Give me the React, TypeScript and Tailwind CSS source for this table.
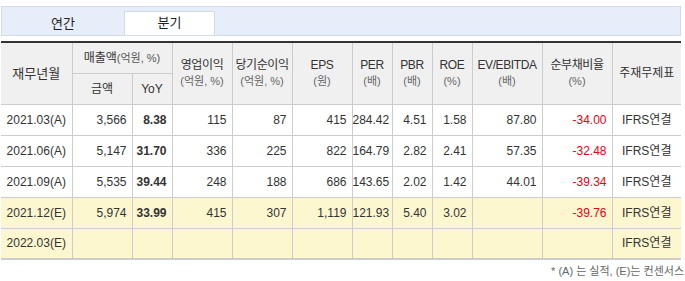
import React from 'react'

type Row = {
  ym: string
  sales: string
  yoy: string
  op: string
  net: string
  eps: string
  per: string
  pbr: string
  roe: string
  ev: string
  debt: string
  est?: boolean
}

const rows: Row[] = [
  { ym: '2021.03(A)', sales: '3,566', yoy: '8.38', op: '115', net: '87', eps: '415', per: '284.42', pbr: '4.51', roe: '1.58', ev: '87.80', debt: '-34.00' },
  { ym: '2021.06(A)', sales: '5,147', yoy: '31.70', op: '336', net: '225', eps: '822', per: '164.79', pbr: '2.82', roe: '2.41', ev: '57.35', debt: '-32.48' },
  { ym: '2021.09(A)', sales: '5,535', yoy: '39.44', op: '248', net: '188', eps: '686', per: '143.65', pbr: '2.02', roe: '1.42', ev: '44.01', debt: '-39.34' },
  { ym: '2021.12(E)', sales: '5,974', yoy: '33.99', op: '415', net: '307', eps: '1,119', per: '121.93', pbr: '5.40', roe: '3.02', ev: '', debt: '-39.76', est: true },
  { ym: '2022.03(E)', sales: '', yoy: '', op: '', net: '', eps: '', per: '', pbr: '', roe: '', ev: '', debt: '', est: true },
]

const widths = [71, 60, 40, 60, 60, 60, 40, 40, 40, 70, 70, 69]

function Head2({ title, unit }: { title: string; unit: string }) {
  return (
    <th rowSpan={2} className="border border-[#cccccc] border-t-0 font-normal align-middle leading-[16px] whitespace-nowrap">
      <div className="text-[12px] tracking-[-0.4px] text-[#333]">{title}</div>
      <div className="text-[11px] text-[#666]">{unit}</div>
    </th>
  )
}

export default function App() {
  const num = 'border border-[#cccccc] text-right pr-[5px]'
  return (
    <div
      className="w-[685px] h-[281px] bg-white px-[1px] pt-[6px]"
      style={{ fontFamily: '"Liberation Sans", "Noto Sans CJK KR", sans-serif' }}
    >
      <div className="w-[680px] h-[30px] bg-[#e8eef9] border border-[#d3dbe8] flex">
        <div className="w-[122px] pt-[8px] text-center text-[13px] leading-[18px] text-[#222]">연간</div>
        <div className="w-[91px] mt-[4px] bg-white border border-b-0 border-[#d3dbe8] text-center pt-[1px] text-[13px] leading-[20px] text-[#222]">
          분기
        </div>
      </div>
      <table className="mt-[5px] w-[680px] border-collapse table-fixed border-t-2 border-t-[#333] border-b-2 border-b-[#cccccc] text-[12px] text-[#333]">
        <colgroup>
          {widths.map((w, i) => (
            <col key={i} style={{ width: w }} />
          ))}
        </colgroup>
        <thead className="bg-[#f0f0f0]">
          <tr className="h-[31px]">
            <th rowSpan={2} className="border border-[#cccccc] border-l-0 border-t-0 font-normal text-[13px]">재무년월</th>
            <th colSpan={2} className="border border-[#cccccc] border-t-0 font-normal text-[12px] whitespace-nowrap">
              매출액<span className="text-[11px] text-[#555]">(억원, %)</span>
            </th>
            <Head2 title="영업이익" unit="(억원, %)" />
            <Head2 title="당기순이익" unit="(억원, %)" />
            <Head2 title="EPS" unit="(원)" />
            <Head2 title="PER" unit="(배)" />
            <Head2 title="PBR" unit="(배)" />
            <Head2 title="ROE" unit="(%)" />
            <Head2 title="EV/EBITDA" unit="(배)" />
            <Head2 title="순부채비율" unit="(%)" />
            <th rowSpan={2} className="border border-[#cccccc] border-r-0 border-t-0 font-normal text-[12px]">주재무제표</th>
          </tr>
          <tr className="h-[31px]">
            <th className="border border-[#cccccc] font-normal text-[12px]">금액</th>
            <th className="border border-[#cccccc] font-normal text-[12px]">YoY</th>
          </tr>
        </thead>
        <tbody>
          {rows.map((r) => (
            <tr key={r.ym} className={`h-[31px] ${r.est ? 'bg-[#fdf7d0]' : 'bg-white'}`}>
              <td className="border border-[#cccccc] border-l-0 text-center">{r.ym}</td>
              <td className={num}>{r.sales}</td>
              <td className={`${num} font-bold`}>{r.yoy}</td>
              <td className={num}>{r.op}</td>
              <td className={num}>{r.net}</td>
              <td className={num}>{r.eps}</td>
              <td className={num}>{r.per}</td>
              <td className={num}>{r.pbr}</td>
              <td className={num}>{r.roe}</td>
              <td className={num}>{r.ev}</td>
              <td className={`${num} text-[#e60012]`}>{r.debt}</td>
              <td className="border border-[#cccccc] border-r-0 text-center text-[12px]">IFRS연결</td>
            </tr>
          ))}
        </tbody>
      </table>
      <p className="mt-[3px] text-right text-[11px] text-[#666]">* (A) 는 실적, (E)는 컨센서스</p>
    </div>
  )
}
